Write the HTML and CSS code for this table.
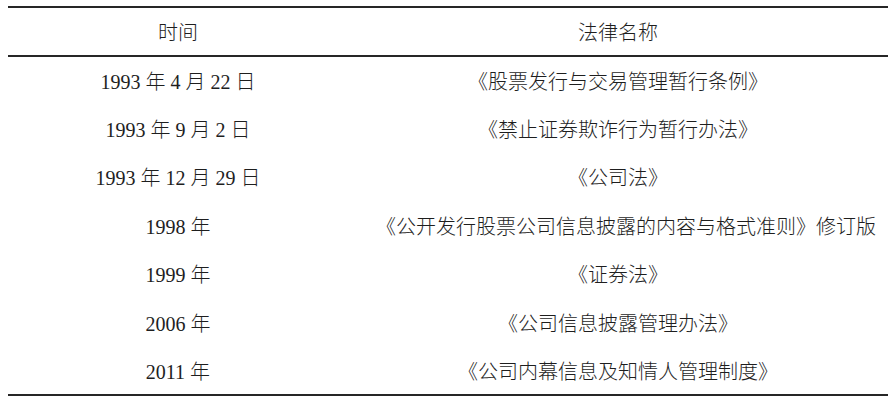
FILE: index.html
```html
<!DOCTYPE html>
<html lang="zh-CN">
<head>
<meta charset="utf-8">
<link rel="stylesheet" href="styles.css">
</head>
<body>
<table class="law-table">
  <thead>
    <tr class="head-row"><th class="col-time">时间</th><th class="col-name">法律名称</th></tr>
  </thead>
  <tbody>
    <tr><td>1993 年 4 月 22 日</td><td>《股票发行与交易管理暂行条例》</td></tr>
    <tr><td>1993 年 9 月 2 日</td><td>《禁止证券欺诈行为暂行办法》</td></tr>
    <tr><td>1993 年 12 月 29 日</td><td>《公司法》</td></tr>
    <tr><td>1998 年</td><td class="long-name">《公开发行股票公司信息披露的内容与格式准则》修订版</td></tr>
    <tr><td>1999 年</td><td>《证券法》</td></tr>
    <tr><td>2006 年</td><td>《公司信息披露管理办法》</td></tr>
    <tr><td>2011 年</td><td>《公司内幕信息及知情人管理制度》</td></tr>
  </tbody>
</table>
</body>
</html>
```

FILE: styles.css
```css
html, body {
  margin: 0;
  padding: 0;
  background: #ffffff;
}
body {
  padding: 6px 7px 0 8px;
}
.law-table {
  width: 880px;
  border-collapse: collapse;
  font-family: "Liberation Serif", "Noto Sans CJK SC", serif;
  font-size: 20px;
  font-weight: 300;
  color: #1e1e1e;
  border-top: 2px solid #262626;
  border-bottom: 2px solid #262626;
}
.law-table th,
.law-table td {
  text-align: center;
  vertical-align: middle;
  padding: 0;
  font-weight: 300;
  white-space: nowrap;
}
.col-time {
  width: 340px;
}
.col-name {
  width: 540px;
}
.head-row {
  height: 49px;
  border-bottom: 2px solid #262626;
}
.law-table tbody tr {
  height: 48.4px;
}
.law-table td.long-name {
  padding-left: 16px;
}
```
